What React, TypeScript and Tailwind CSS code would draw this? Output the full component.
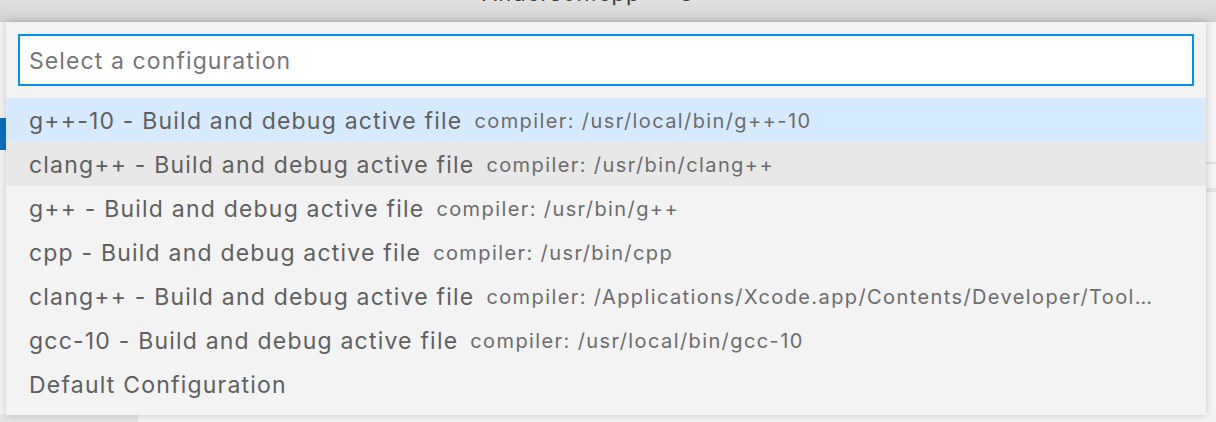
const items = [
  { label: 'g++-10 - Build and debug active file', desc: 'compiler: /usr/local/bin/g++-10', state: 'focused' },
  { label: 'clang++ - Build and debug active file', desc: 'compiler: /usr/bin/clang++', state: 'hover' },
  { label: 'g++ - Build and debug active file', desc: 'compiler: /usr/bin/g++' },
  { label: 'cpp - Build and debug active file', desc: 'compiler: /usr/bin/cpp' },
  {
    label: 'clang++ - Build and debug active file',
    desc: 'compiler: /Applications/Xcode.app/Contents/Developer/Toolchains/XcodeDefault.xctoolchain/usr/bin/clang++',
  },
  { label: 'gcc-10 - Build and debug active file', desc: 'compiler: /usr/local/bin/gcc-10' },
  { label: 'Default Configuration', desc: '' },
]

export default function App() {
  return (
    <div className="relative w-[1216px] h-[422px] overflow-hidden bg-[#f3f3f3] font-['Inter','Liberation_Sans',sans-serif]">
      {/* window title bar */}
      <div className="h-[22px] overflow-hidden bg-gradient-to-b from-[#e2e2e2] to-[#d0d0d0] border-b border-[#c8c8c8] flex justify-center">
        <span className="mt-[-18px] text-[22px] leading-[22px] tracking-[1px] text-[#3a3a3a] ml-[-8px]">Anderson.cpp — C++</span>
      </div>

      {/* editor behind */}
      <div className="flex h-[400px]">
        <div className="w-[138px] bg-[#f3f3f3] flex flex-col">
          <div className="h-[96px]" />
          <div className="h-[32px] w-[40px] bg-[#0e70c0]" />
          <div className="h-[52px]" />
          <div className="text-[22px] leading-[34px] text-[#616161] -ml-[14px]">c</div>
          <div className="text-[22px] leading-[34px] text-[#0e70c0] -ml-[14px]">e</div>
          <div className="text-[22px] leading-[34px] text-[#616161] -ml-[14px] mt-[30px]">u</div>
          <div className="flex-1" />
          <div className="h-[8px] bg-[#e4e4e4]" />
        </div>
        <div className="flex-1 bg-[#f3f3f3] flex flex-col">
          <div className="h-[98px]" />
          <div className="h-[44px] border-b-[2px] border-[#e0e0e0]" />
          <div className="h-[28px] border-b-[4px] border-[#e4e4e4]" />
        </div>
      </div>

      {/* quick pick */}
      <div className="absolute left-[6px] top-[22px] w-[1200px] h-[393px] bg-[#f3f3f3] shadow-[0_0_8px_rgba(0,0,0,0.18)] pt-[12px]">
        <div className="mx-[12px] h-[52px] bg-white border-2 border-[#0090f1] flex items-center px-[9px] pt-[2px]">
          <span className="text-[23px] tracking-[1.1px] text-[#767676]">Select a configuration</span>
        </div>
        <div className="mt-[12px] flex flex-col">
          {items.map((it, i) => (
            <div
              key={i}
              className={`h-[44px] flex items-center pl-[23px] pr-[47px] pt-[2px] whitespace-nowrap overflow-hidden ${
                it.state === 'focused' ? 'bg-[#d6ebff]' : it.state === 'hover' ? 'bg-[#e8e8e8]' : ''
              }`}
            >
              <span className="text-[23px] tracking-[1.2px] text-[#5f5f5f] shrink-0">{it.label}</span>
              {it.desc && (
                <span className="ml-[12px] text-[20px] tracking-[1.4px] text-[#6c6c6c] truncate min-w-0">{it.desc}</span>
              )}
            </div>
          ))}
        </div>
      </div>
    </div>
  )
}
